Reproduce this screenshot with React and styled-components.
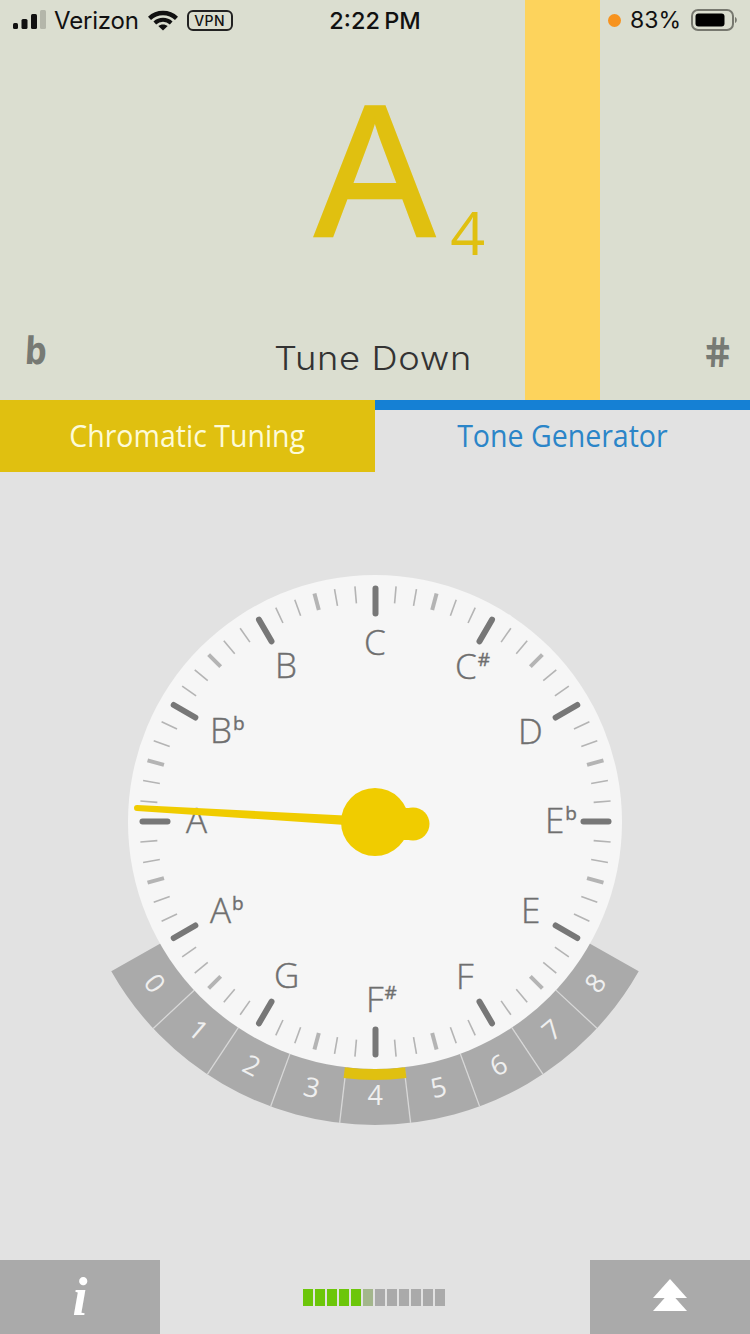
import React from "react";
import styled, { createGlobalStyle } from "styled-components";

const Global = createGlobalStyle`
  html, body { margin: 0; padding: 0; background: #e2e2e2; }
  body { font-family: "Open Sans", sans-serif; }
`;

const Screen = styled.div`
  width: 750px;
  height: 1334px;
  display: flex;
  flex-direction: column;
  background: #e2e2e2;
  overflow: hidden;
`;

const TopPanel = styled.section`
  position: relative;
  height: 400px;
  flex: none;
  display: flex;
  flex-direction: column;
  background: #dbded0;
`;

const PitchBar = styled.div`
  position: absolute;
  left: 525px;
  top: 0;
  bottom: 0;
  width: 75px;
  background: #fdd35c;
`;

const StatusBar = styled.header`
  position: relative;
  z-index: 1;
  height: 40px;
  flex: none;
  display: grid;
  grid-template-columns: 1fr auto 1fr;
  align-items: center;
  padding: 0 13px;
  color: #111;
  font-family: Inter, "Liberation Sans", sans-serif;
  font-size: 24px;
`;

const StatusGroup = styled.div`
  display: flex;
  align-items: center;
  justify-content: ${(p) => (p.$end ? "flex-end" : "flex-start")};
`;

const Carrier = styled.span`
  margin: 0 9px 0 8px;
  font-size: 24px;
  letter-spacing: -0.2px;
`;

const VpnBadge = styled.span`
  box-sizing: border-box;
  width: 46px;
  height: 21px;
  margin-left: 9px;
  display: flex;
  align-items: center;
  justify-content: center;
  border: 2px solid #222;
  border-radius: 6px;
  font-size: 14px;
  font-weight: 500;
  letter-spacing: 0.4px;
`;

const Clock = styled.span`
  font-size: 23.5px;
  font-weight: 500;
  word-spacing: -2px;
`;

const OrangeDot = styled.span`
  width: 13px;
  height: 13px;
  margin-right: 9px;
  border-radius: 50%;
  background: #f7931e;
`;

const Percent = styled.span`
  margin-right: 10px;
  font-size: 23px;
`;

const NoteArea = styled.div`
  flex: 1;
  display: flex;
  justify-content: center;
  align-items: flex-start;
`;

const NoteWrap = styled.div`
  position: relative;
  margin-top: 26px;
`;

const NoteLetter = styled.span`
  display: block;
  font-family: "Liberation Sans", Arial, sans-serif;
  font-size: 188px;
  line-height: 210px;
  color: #e0c010;
  -webkit-text-stroke: 2.5px #e0c010;
  transform: scaleX(0.96);
`;

const Octave = styled.span`
  position: absolute;
  left: 138px;
  top: 126px;
  font-family: "Open Sans", sans-serif;
  font-weight: 400;
  font-size: 61px;
  line-height: 80px;
  color: #e0c010;
`;

const HintRow = styled.div`
  position: relative;
  z-index: 1;
  height: 90px;
  flex: none;
  display: flex;
  justify-content: space-between;
  align-items: flex-start;
  padding: 0 18px 0 25px;
`;

const Accidental = styled.span`
  margin-top: ${(p) => p.$top}px;
  font-family: "DejaVu Sans", sans-serif;
  font-weight: 700;
  font-size: ${(p) => p.$size}px;
  line-height: 40px;
  color: #777a74;
  transform-origin: ${(p) => p.$origin} center;
  transform: scale(${(p) => p.$sx}, ${(p) => p.$sy}) skewX(${(p) => p.$skew}deg);
`;

const Hint = styled.span`
  position: absolute;
  left: 0;
  right: 4px;
  top: 26px;
  text-align: center;
  font-family: Inter, sans-serif;
  font-weight: 300;
  font-size: 33px;
  line-height: 44px;
  letter-spacing: 0.6px;
  color: #333;
  transform: scaleX(1.1);
`;

const Tabs = styled.nav`
  height: 72px;
  flex: none;
  display: grid;
  grid-template-columns: 1fr 1fr;
`;

const Tab = styled.div`
  box-sizing: border-box;
  display: flex;
  align-items: center;
  justify-content: center;
  background: ${(p) => (p.$active ? "#e0c010" : "#e2e2e2")};
  border-top: ${(p) => (p.$active ? "none" : "10px solid #1580d4")};
  color: ${(p) => (p.$active ? "#fdfbd8" : "#2b85c8")};
  font-family: "Open Sans", sans-serif;
  font-size: 31px;
  > span {
    display: block;
    transform: translateY(${(p) => (p.$active ? -1 : -6)}px) scaleX(0.92);
  }
`;

const DialArea = styled.main`
  flex: 1;
  display: flex;
  justify-content: center;
  padding-top: 98px;
`;

const DialSvg = styled.svg`
  display: block;
  width: 550px;
  height: 560px;
  flex: none;
`;

const DialLabel = styled.text`
  font-family: "Open Sans", sans-serif;
  font-weight: 300;
  font-size: 35px;
  fill: #6f6f6f;
  stroke: #6f6f6f;
  stroke-width: 0.4px;
`;

const SupMark = styled.tspan`
  font-family: "Open Sans", sans-serif;
  font-weight: 400;
  font-size: 19px;
`;

const OctaveDigit = styled.text`
  font-family: "Open Sans", sans-serif;
  font-weight: 400;
  font-size: 27px;
  fill: #efefef;
`;

const BottomBar = styled.footer`
  height: 74px;
  flex: none;
  display: grid;
  grid-template-columns: 160px 1fr 160px;
`;

const BottomButton = styled.div`
  display: flex;
  align-items: center;
  justify-content: center;
  background: #aaaaaa;
`;

const InfoGlyph = styled.span`
  font-family: "Liberation Serif", serif;
  font-style: italic;
  font-weight: 700;
  font-size: 54px;
  line-height: 54px;
  color: #fff;
`;

const LevelMeter = styled.div`
  display: flex;
  align-items: center;
  justify-content: center;
  gap: 1.5px;
  padding-right: 2px;
`;

const LevelCell = styled.span`
  width: 10.5px;
  height: 17px;
  background: ${(p) => p.$color};
`;

const ArrowIcon = styled.svg`
  display: block;
  margin-bottom: 4px;
`;

const CX = 275;
const CY = 252;
const toRad = (d) => (d * Math.PI) / 180;
const polar = (r, deg) => [CX + 0.5 + r * Math.sin(toRad(deg)), CY - 0.5 - r * Math.cos(toRad(deg))];

const ticks = Array.from({ length: 72 }, (_, i) => {
  const deg = i * 5;
  const major = i % 6 === 0;
  const mid = !major && i % 3 === 0;
  const [x1, y1] = polar(major ? 208 : 219, deg);
  const [x2, y2] = polar(major ? 233 : 236, deg);
  return (
    <line
      key={i}
      x1={x1}
      y1={y1}
      x2={x2}
      y2={y2}
      stroke={major ? "#777" : "#b4b4b4"}
      strokeWidth={major ? 6 : mid ? 4 : 1.6}
      strokeLinecap={major ? "round" : "butt"}
    />
  );
});

const SEG = 13.45;
const ringPoint = (r, a) => [CX + r * Math.sin(toRad(a)), CY + r * Math.cos(toRad(a))];
const arcPath = (r0, r1, a0, a1) => {
  const [ax, ay] = ringPoint(r1, a0);
  const [bx, by] = ringPoint(r1, a1);
  const [cx, cy] = ringPoint(r0, a1);
  const [dx, dy] = ringPoint(r0, a0);
  return `M${ax} ${ay}A${r1} ${r1} 0 0 0 ${bx} ${by}L${cx} ${cy}A${r0} ${r0} 0 0 1 ${dx} ${dy}Z`;
};

const boundaries = Array.from({ length: 8 }, (_, i) => {
  const a = -60.5 + SEG * (i + 1);
  const [x1, y1] = ringPoint(247, a);
  const [x2, y2] = ringPoint(303, a);
  return <line key={i} x1={x1} y1={y1} x2={x2} y2={y2} stroke="#d8d8d8" strokeWidth="1.3" />;
});

const digits = Array.from({ length: 9 }, (_, i) => {
  const a = -60.5 + SEG * (i + 0.5);
  const [x, y] = ringPoint(272, a);
  return (
    <OctaveDigit
      key={i}
      x={x}
      y={y}
      textAnchor="middle"
      dominantBaseline="central"
      transform={`rotate(${-a} ${x} ${y})`}
    >
      {i}
    </OctaveDigit>
  );
});

// x is the left edge of the letter, y the baseline, both in page coordinates.
const labels = [
  ["C", 364, 655],
  ["C", 455, 679, "#"],
  ["D", 518, 744],
  ["E", 545, 833, "b"],
  ["E", 521, 923],
  ["F", 456, 989],
  ["F", 366, 1012, "#"],
  ["G", 274, 988],
  ["A", 210, 923, "b"],
  ["A", 186, 833],
  ["B", 210, 743, "b"],
  ["B", 275, 678],
];

const cellColors = [
  ...Array(5).fill("#6cc60a"),
  "#a3b68c",
  ...Array(6).fill("#aaaaaa"),
];

const Signal = () => (
  <svg width="33" height="20" viewBox="0 0 33 20">
    <rect x="0" y="13" width="5" height="6" rx="1.5" fill="#111" />
    <rect x="8.500" y="9" width="6" height="10" rx="1.5" fill="#111" />
    <rect x="18" y="4" width="6" height="15" rx="1.5" fill="#111" />
    <rect x="27" y="0" width="6" height="19" rx="1.5" fill="#b4b6aa" />
  </svg>
);

const Wifi = () => (
  <svg width="30" height="21" viewBox="0 0 30 21">
    <path d="M1.500 8.300C5 5 9.500 3 15 3s10 2 13.500 5.300" fill="none" stroke="#111" strokeWidth="4.400" />
    <path d="M6.800 13C9.200 10.800 11.800 9.800 15 9.800s5.800 1 8.200 3.200" fill="none" stroke="#111" strokeWidth="4" />
    <path d="M10.300 16C11.600 15 13.200 14.400 15 14.400s3.400.6 4.700 1.600L15 20.500Z" fill="#111" />
  </svg>
);

const Battery = () => (
  <svg width="46" height="22" viewBox="0 0 46 22">
    <rect x="1" y="1" width="41" height="20" rx="6" fill="none" stroke="#77786f" strokeWidth="2" />
    <rect x="4.500" y="4.500" width="29" height="13" rx="3" fill="#000" />
    <path d="M44 8c1.300.6 1.800 1.800 1.800 3s-.5 2.400-1.800 3Z" fill="#77786f" />
  </svg>
);

const DoubleArrow = () => (
  <ArrowIcon width="36" height="32" viewBox="0 0 36 32">
    <path d="M18 0 35 19H1Z" fill="#fff" />
    <path d="M18 13 35 32H1Z" fill="#fff" />
  </ArrowIcon>
);

export default function App() {
  const [tipX, tipY] = [137 - 100, 808 - 570];
  return (
    <Screen>
      <Global />
      <TopPanel>
        <PitchBar />
        <StatusBar>
          <StatusGroup>
            <Signal />
            <Carrier>Verizon</Carrier>
            <Wifi />
            <VpnBadge>VPN</VpnBadge>
          </StatusGroup>
          <Clock>2:22 PM</Clock>
          <StatusGroup $end>
            <OrangeDot />
            <Percent>83%</Percent>
            <Battery />
          </StatusGroup>
        </StatusBar>
        <NoteArea>
          <NoteWrap>
            <NoteLetter>A</NoteLetter>
            <Octave>4</Octave>
          </NoteWrap>
        </NoteArea>
        <HintRow>
          <Accidental $size={38} $top={21} $skew={-4} $sx={0.8} $sy={1} $origin="left">b</Accidental>
          <Hint>Tune Down</Hint>
          <Accidental $size={36} $top={23} $skew={10} $sx={0.95} $sy={1.15} $origin="right">#</Accidental>
        </HintRow>
      </TopPanel>
      <Tabs>
        <Tab $active><span>Chromatic Tuning</span></Tab>
        <Tab><span>Tone Generator</span></Tab>
      </Tabs>
      <DialArea>
        <DialSvg viewBox="0 0 550 560">
          <path d={arcPath(240, 303, -60.5, 60.5)} fill="#aaaaaa" />
          {boundaries}
          <circle cx={CX} cy={CY} r="247" fill="#f6f6f6" />
          <path d={arcPath(247, 258, -7, 7)} fill="#e0c010" />
          {digits}
          {ticks}
          {labels.map(([letter, x, y, sup]) => (
            <DialLabel key={letter + x} x={x - 100} y={y - 570}>
              {letter}
              {sup && <SupMark dy="-13" dx="1">{sup}</SupMark>}
            </DialLabel>
          ))}
          <path
            d={`M${tipX} ${tipY - 3}L${CX} ${CY - 5}L${CX} ${CY + 5}L${tipX} ${tipY + 3}A3 3 0 0 1 ${tipX} ${tipY - 3}Z`}
            fill="#f0cc00"
          />
          <circle cx={CX} cy={CY} r="34" fill="#f0cc00" />
          <rect x={CX + 20} y={CY - 14} width="18" height="32" fill="#f0cc00" />
          <circle cx={CX + 38} cy={CY + 2} r="16.500" fill="#f0cc00" />
        </DialSvg>
      </DialArea>
      <BottomBar>
        <BottomButton><InfoGlyph>i</InfoGlyph></BottomButton>
        <LevelMeter>
          {cellColors.map((color, i) => (
            <LevelCell key={i} $color={color} />
          ))}
        </LevelMeter>
        <BottomButton><DoubleArrow /></BottomButton>
      </BottomBar>
    </Screen>
  );
}
